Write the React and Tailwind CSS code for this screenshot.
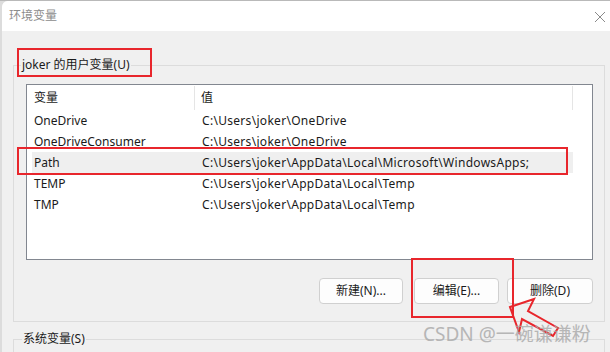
import React from "react";

const font = { fontFamily: '"Noto Sans", "Noto Sans CJK SC", sans-serif' };

const rows = [
  ["OneDrive", "C:\\Users\\joker\\OneDrive"],
  ["OneDriveConsumer", "C:\\Users\\joker\\OneDrive"],
  ["Path", "C:\\Users\\joker\\AppData\\Local\\Microsoft\\WindowsApps;"],
  ["TEMP", "C:\\Users\\joker\\AppData\\Local\\Temp"],
  ["TMP", "C:\\Users\\joker\\AppData\\Local\\Temp"],
];

function Btn({ children, w }) {
  return (
    <button
      className={`h-[26px] ${w} rounded-[4px] border border-[#d0d0d0] bg-[#fdfdfd] text-[12px] text-[#1a1a1a] flex items-center justify-center`}
    >
      {children}
    </button>
  );
}

export default function App() {
  return (
    <div
      className="relative w-[610px] h-[352px] overflow-hidden bg-[#dcdcdc] pl-[2px] border-t border-[#b9b9b9] text-[12px] text-[#1a1a1a]"
      style={font}
    >
      <div className="flex flex-col h-full bg-[#f0f0f0] rounded-tl-[6px] overflow-hidden">
        {/* title bar */}
        <div className="h-[30px] shrink-0 bg-white flex items-center justify-between pl-[7px] pr-[3px]">
          <span className="text-[12px] text-[#8c8c8c]">环境变量</span>
          <svg width="12" height="12" viewBox="0 0 12 12" className="mr-[1px] mt-[1px]">
            <path d="M1 1L11 11M11 1L1 11" stroke="#8a8a8a" strokeWidth="1" />
          </svg>
        </div>

        {/* body */}
        <div className="flex-1 pt-[34px] pl-[11px] pr-[5px]">
          <div className="relative border border-[#dcdcdc] pt-[18px] pl-[12px] pr-[11px] pb-[17px]">
            <span className="absolute -top-[9px] left-[7px] bg-[#f0f0f0] px-[1px] leading-[16px]">
              joker 的用户变量(U)
            </span>
            {/* list */}
            <div className="h-[176px] border border-[#828790] bg-white pl-[5px]">
              <div className="flex h-[25px] items-center">
                <div className="w-[163px] h-[24px] flex items-center pl-[2px] border-r border-[#e5e5e5]">变量</div>
                <div className="w-[378px] h-[24px] flex items-center pl-[6px] border-r border-[#e5e5e5]">值</div>
              </div>
              {rows.map(([k, v]) => (
                <div
                  key={k}
                  className={`flex h-[21px] items-center w-[541px] ${k === "Path" ? "bg-[#efefef]" : ""}`}
                >
                  <div className="w-[163px] pl-[2px]">{k}</div>
                  <div className="pl-[7px] tracking-[0.3px]">{v}</div>
                </div>
              ))}
            </div>
            {/* buttons */}
            <div className="flex justify-end mt-[18px]">
              <Btn w="w-[84px]">新建(N)...</Btn>
              <div className="w-[11px]" />
              <Btn w="w-[85px]">编辑(E)...</Btn>
              <div className="w-[8px]" />
              <Btn w="w-[86px]">删除(D)</Btn>
            </div>
          </div>
          <div className="relative border border-[#dcdcdc] mt-[17px] h-[40px]">
            <span className="absolute -top-[9px] left-[8px] bg-[#f0f0f0] px-[1px] leading-[16px]">
              系统变量(S)
            </span>
          </div>
        </div>
      </div>

      {/* annotations */}
      <div className="absolute left-[17px] top-[47px] w-[135px] h-[29px] border-2 border-[#e8262c]" />
      <div className="absolute left-[17px] top-[146px] w-[551px] h-[28px] border-2 border-[#e8262c]" />
      <div className="absolute left-[411px] top-[257px] w-[103px] h-[60px] border-2 border-[#e8262c]" />
      <svg className="absolute left-0 top-0" width="610" height="352" viewBox="0 0 610 352">
        <polygon
          points="510,306 534,298 528,310 558,327 553,335 522,318 519,331"
          fill="none"
          stroke="#e8262c"
          strokeWidth="2"
          strokeLinejoin="miter"
        />
      </svg>
      <div
        className="absolute left-[423px] top-[321px] text-[19px] leading-[24px] text-[#a8a8a8] opacity-80"
        style={font}
      >
        CSDN @一碗谦谦粉
      </div>
    </div>
  );
}
